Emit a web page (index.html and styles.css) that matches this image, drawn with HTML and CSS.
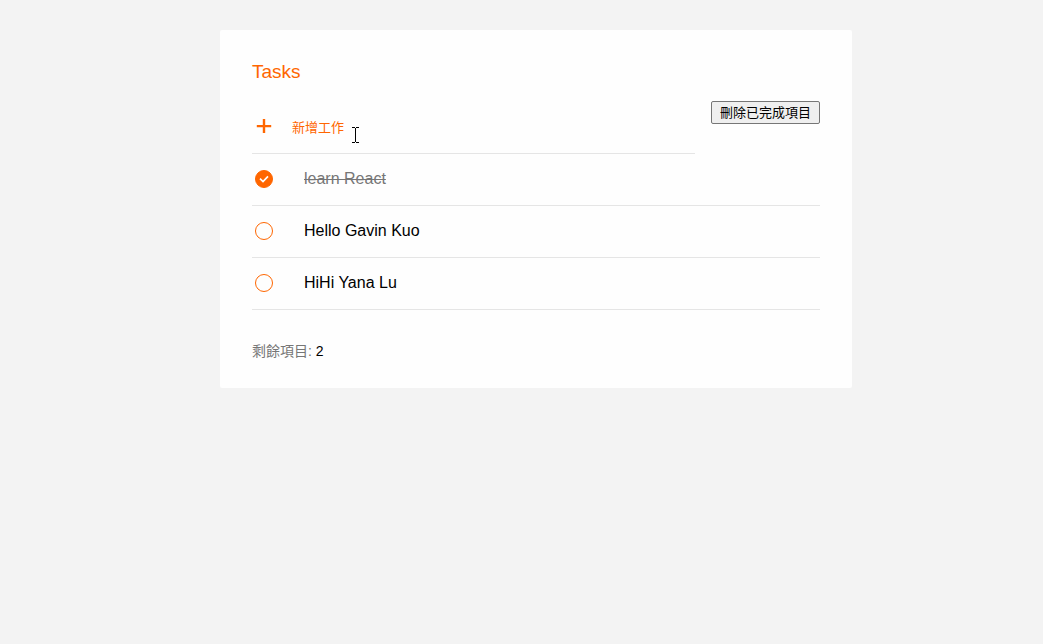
FILE: index.html
```html
<!DOCTYPE html>
<html lang="zh-Hant">
<head>
<meta charset="utf-8">
<meta name="viewport" content="width=device-width, initial-scale=1">
<title>Tasks</title>
<link rel="stylesheet" href="styles.css">
</head>
<body>
<main class="page">
  <section class="card">
    <h1 class="title">Tasks</h1>
    <div class="toolbar">
      <form class="add">
        <button class="add-button" type="button" aria-label="新增">
          <svg class="icon" viewBox="0 0 24 24" aria-hidden="true"><path d="M4.8 9.9H19.2V12.3H4.8ZM10.8 3.9H13.2V18.1H10.8Z" fill="#f60"/></svg>
        </button>
        <input class="add-input" type="text" placeholder="新增工作" aria-label="新增工作">
        <svg class="caret" viewBox="0 0 7 16" shape-rendering="crispEdges" aria-hidden="true"><path d="M0 0H3V1H4V0H7V1H4V15H7V16H4V15H3V16H0V15H3V1H0Z" fill="#000"/></svg>
      </form>
      <button class="clear" type="button">刪除已完成項目</button>
    </div>
    <ul class="list">
      <li class="item">
        <label class="task">
          <span class="mark">
            <input class="check" type="checkbox" checked>
            <svg class="tick" viewBox="0 0 18 18" aria-hidden="true"><path d="M5 8.7L8 11.5L13 6.3" fill="none" stroke="#fff" stroke-width="1.7"/></svg>
          </span>
          <span class="text done">learn React</span>
        </label>
      </li>
      <li class="item">
        <label class="task">
          <span class="mark"><input class="check" type="checkbox"></span>
          <span class="text">Hello Gavin Kuo</span>
        </label>
      </li>
      <li class="item">
        <label class="task">
          <span class="mark"><input class="check" type="checkbox"></span>
          <span class="text">HiHi Yana Lu</span>
        </label>
      </li>
    </ul>
    <p class="remaining"><span class="remaining-label">剩餘項目:</span> 2</p>
  </section>
</main>
</body>
</html>
```
FILE: styles.css
```css
* {
  box-sizing: border-box;
}

body {
  margin: 0;
  background: #f3f3f3;
  color: #000;
  font-family: "Liberation Sans", Arial, "Noto Sans CJK TC", sans-serif;
  font-size: 16px;
}

.page {
  display: flex;
  justify-content: center;
  padding: 30px 0 30px 29px;
}

.card {
  width: 100%;
  max-width: 632px;
  padding: 30px 32px 27px;
  border-radius: 2px;
  background: #fefefe;
}

.title {
  margin: 0 0 17px;
  color: #f60;
  font-size: 19px;
  font-weight: 400;
  line-height: 24px;
}

.toolbar {
  display: flex;
  align-items: flex-start;
  gap: 16px;
}

.add {
  position: relative;
  display: flex;
  flex: 1;
  align-items: center;
  gap: 16px;
  min-width: 0;
  height: 53px;
  border-bottom: 1px solid #e5e5e5;
}

.add-button {
  flex: none;
  width: 24px;
  height: 24px;
  padding: 0;
  border: 0;
  background: none;
}

.icon {
  display: block;
  width: 24px;
  height: 24px;
}

.add-input {
  flex: 1;
  min-width: 0;
  height: 24px;
  padding: 0;
  border: 0;
  outline: 0;
  background: none;
  font-family: inherit;
  font-size: 13px;
}

.add-input::placeholder {
  color: #f60;
  opacity: 1;
}

.caret {
  position: absolute;
  top: 26px;
  left: 100px;
  width: 7px;
  height: 16px;
  pointer-events: none;
}

.clear {
  flex: none;
  height: 23px;
  padding: 0 8px;
  border: 1px solid #767676;
  border-radius: 2px;
  background: #efefef;
  color: #000;
  font-family: inherit;
  font-size: 13px;
  line-height: 21px;
}

.list {
  margin: 0;
  padding: 0;
  list-style: none;
}

.item {
  border-bottom: 1px solid #e5e5e5;
}

.task {
  display: flex;
  align-items: center;
  gap: 28px;
  height: 51px;
  padding-bottom: 2px;
}

.mark {
  display: grid;
  flex: none;
  place-items: center;
  width: 24px;
  height: 24px;
}

.check {
  grid-area: 1 / 1;
  width: 18px;
  height: 18px;
  margin: 0;
  border: 1px solid #f60;
  border-radius: 50%;
  appearance: none;
}

.check:checked {
  background: #f60;
}

.tick {
  z-index: 1;
  grid-area: 1 / 1;
  width: 18px;
  height: 18px;
}

.text {
  line-height: 20px;
}

.done {
  color: #767676;
  text-decoration: line-through;
}

.remaining {
  margin: 31px 0 0;
  font-size: 14px;
  line-height: 20px;
}

.remaining-label {
  color: #767676;
}
```
